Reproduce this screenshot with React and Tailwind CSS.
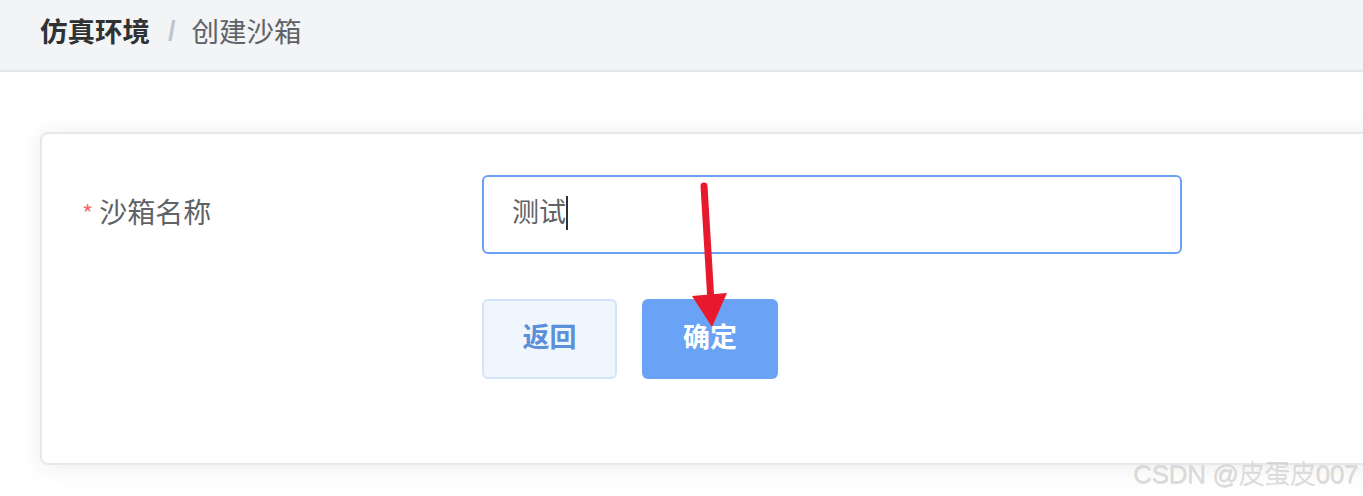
import { useState } from "react";

const FONT = { fontFamily: '"Noto Sans CJK SC", "Noto Sans", sans-serif' };

const App = () => {
    const [name, setName] = useState("测试");

    return (
        <div className="relative w-[1363px] h-[496px] overflow-hidden bg-white" style={FONT}>

            {/* BREADCRUMB */}

            <div className="h-[72px] bg-[#f3f4f6] border-b-2 border-[#e4e6eb] flex items-center pl-10 pb-2 text-[27.5px] leading-none">
                <span className="font-bold text-[#303133]">仿真环境</span>
                <span
                    className="ml-[18px] mr-[16px] font-bold text-[#c0c4cc] text-[27px]"
                    style={{ fontFamily: '"Liberation Sans", sans-serif' }}
                >
                    /
                </span>
                <span className="text-[#606266]">创建沙箱</span>
            </div>

            {/* FORM CARD */}

            <div className="ml-10 mt-[60px] w-[1360px] bg-white border-2 border-[#e6e8ee] rounded-lg shadow-[0_2px_24px_rgba(0,0,0,0.08)] pl-10 pt-[41px] pb-[84px]">

                <div className="flex items-center">
                    <label className="w-[400px] text-[28px] text-[#606266] flex items-center leading-none pb-2">
                        <span className="text-[#f56c6c] text-[24px] mr-[6px] mt-1">*</span>
                        沙箱名称
                    </label>

                    <div className="w-[700px] h-[79px] rounded-md border-2 border-[#6aa1f5] flex items-center px-7 pb-2 text-[27px] leading-none text-[#606266]">
                        <span>{name}</span>
                        <span className="w-[2px] h-[34px] bg-[#303133] mt-1" />
                    </div>
                </div>

                <div className="flex gap-[25px] ml-[400px] mt-[45px]">
                    <button
                        onClick={() => setName("")}
                        className="w-[135px] h-[80px] rounded-md border-2 border-[#d2e3fa] bg-[#f0f6fe] text-[#5b8fd9] font-bold text-[27px] leading-none pb-2"
                    >
                        返回
                    </button>
                    <button className="w-[136px] h-[80px] rounded-md bg-[#6aa2f6] text-white font-bold text-[27px] leading-none pb-2">
                        确定
                    </button>
                </div>

            </div>

            {/* ANNOTATION ARROW */}

            <svg className="absolute left-0 top-0 pointer-events-none" width="1363" height="496">
                <line x1="704" y1="186" x2="711" y2="302" stroke="#e8192c" strokeWidth="7" strokeLinecap="round" />
                <polygon points="692,296 727,293 712,327" fill="#e8192c" />
            </svg>

            {/* WATERMARK */}

            <div
                className="absolute right-[5px] top-[455px] text-[26px] text-[#dadada] tracking-[-0.3px]"
                style={{
                    fontFamily: '"Liberation Sans", "Noto Sans CJK SC", sans-serif',
                    fontWeight: 300,
                    textShadow: "0.5px 0.5px 0 rgba(150,150,150,0.3)"
                }}
            >
                CSDN @皮蛋皮007
            </div>

        </div>
    );
};

export default App;
